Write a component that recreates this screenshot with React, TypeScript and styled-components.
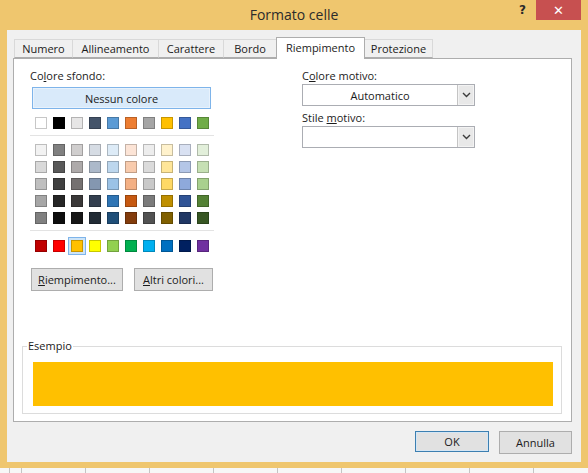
import React from 'react';
import styled, {createGlobalStyle} from 'styled-components';

const THEME = ['#FFFFFF', '#000000', '#E7E6E6', '#44546A', '#5B9BD5', '#ED7D31', '#A5A5A5', '#FFC000', '#4472C4', '#70AD47'];
const TINTS = [
    ['#F2F2F2', '#808080', '#D0CECE', '#D6DCE4', '#DDEBF7', '#FCE4D6', '#EDEDED', '#FFF2CC', '#D9E1F2', '#E2EFDA'],
    ['#D9D9D9', '#595959', '#AEAAAA', '#ACB9CA', '#BDD7EE', '#F8CBAD', '#DBDBDB', '#FFE699', '#B4C6E7', '#C6E0B4'],
    ['#BFBFBF', '#404040', '#757171', '#8497B0', '#9BC2E6', '#F4B084', '#C9C9C9', '#FFD966', '#8EA9DB', '#A9D08E'],
    ['#A6A6A6', '#262626', '#3A3838', '#333F4F', '#2F75B5', '#C65911', '#7B7B7B', '#BF8F00', '#305496', '#548235'],
    ['#808080', '#0D0D0D', '#161616', '#222B35', '#1F4E78', '#833C0C', '#525252', '#806000', '#203764', '#375623'],
];
const STANDARD = ['#C00000', '#FF0000', '#FFC000', '#FFFF00', '#92D050', '#00B050', '#00B0F0', '#0070C0', '#002060', '#7030A0'];
const TABS = [
    {label: 'Numero', width: 58},
    {label: 'Allineamento', width: 86},
    {label: 'Carattere', width: 65},
    {label: 'Bordo', width: 53},
    {label: 'Riempimento', width: 88, active: true},
    {label: 'Protezione', width: 68},
];

const Global = createGlobalStyle`
html, body { margin: 0; padding: 0; }
body {
  font-family: "Open Sans", "Noto Sans", sans-serif;
  font-size: 11px;
  color: #1b1b1b;
}
#root { width: 588px; height: 473px; overflow: hidden; }
`;

const Frame = styled.div`
  box-sizing: border-box;
  width: 588px;
  height: 468px;
  padding: 0 7px 6px 7px;
  background: #efc66e;
  display: flex;
  flex-direction: column;
`;

const TitleBar = styled.div`
  height: 30px;
  display: grid;
  grid-template-columns: 1fr auto 1fr;
`;

const Title = styled.div`
  grid-column: 2;
  line-height: 30px;
  font-size: 14px;
  color: #2b2b2b;
`;

const Controls = styled.div`
  grid-column: 3;
  justify-self: end;
  align-self: start;
  display: flex;
`;

const CaptionButton = styled.div<{$close?: boolean}>`
  width: ${p => (p.$close ? 45 : 27)}px;
  height: 20px;
  display: flex;
  align-items: center;
  justify-content: center;
  background: ${p => (p.$close ? '#c75050' : 'transparent')};
  color: ${p => (p.$close ? '#fff' : '#2a2a2a')};
  font-family: "DejaVu Sans", sans-serif;
  font-weight: bold;
  font-size: ${p => (p.$close ? 13 : 12)}px;
`;

const Body = styled.div`
  box-sizing: border-box;
  height: 432px;
  background: #f0f0f0;
  padding: 7px 9px 8px 6px;
  display: flex;
  flex-direction: column;
`;

const TabRow = styled.div`
  height: 21px;
  display: flex;
  align-items: flex-end;
  padding-left: 1px;
`;

const Tab = styled.div<{$active?: boolean; $w: number}>`
  box-sizing: border-box;
  width: ${p => p.$w + 1}px;
  margin-right: -1px;
  height: ${p => (p.$active ? 22 : 19)}px;
  margin-bottom: ${p => (p.$active ? -1 : 0)}px;
  background: ${p => (p.$active ? '#fff' : '#f0f0f0')};
  border: 1px solid ${p => (p.$active ? '#adadad' : '#d9d9d9')};
  border-bottom: ${p => (p.$active ? 'none' : '1px solid #adadad')};
  display: flex;
  justify-content: center;
  align-items: ${p => (p.$active ? 'flex-start' : 'center')};
  padding-top: ${p => (p.$active ? 2 : 0)}px;
  position: relative;
  z-index: ${p => (p.$active ? 2 : 1)};
  font-size: 11px;
  line-height: 15px;
`;

const Panel = styled.div`
  box-sizing: border-box;
  height: 366px;
  background: #fff;
  border: 1px solid #adadad;
  padding: 9px 9px 7px 8px;
  display: flex;
  flex-direction: column;
`;

const Columns = styled.div`
  display: flex;
  padding-left: 8px;
`;

const LeftColumn = styled.div`
  width: 272px;
  display: flex;
  flex-direction: column;
`;

const RightColumn = styled.div`
  width: 173px;
  display: flex;
  flex-direction: column;
`;

const Label = styled.div<{$gap?: number}>`
  line-height: 15px;
  margin-top: ${p => p.$gap ?? 0}px;
`;

const NoColorButton = styled.div`
  box-sizing: border-box;
  width: 179px;
  height: 22px;
  margin: 4px 0 0 2px;
  border: 1px solid #7eb4ea;
  box-shadow: inset 0 0 0 1px #e8f2fc;
  background: #d9eafa;
  display: flex;
  align-items: center;
  justify-content: center;
`;

const SwatchRow = styled.div<{$top: number}>`
  display: flex;
  gap: 6px;
  margin: ${p => p.$top}px 0 0 5px;
`;

const SwatchGrid = styled.div`
  display: grid;
  grid-template-columns: repeat(10, 12px);
  column-gap: 6px;
  row-gap: 5px;
  margin-left: 5px;
`;

const Swatch = styled.div<{$selected?: boolean}>`
  box-sizing: border-box;
  width: 12px;
  height: 12px;
  border: 1px solid rgba(0, 0, 0, 0.22);
  box-shadow: ${p => (p.$selected ? '0 0 0 2px #cde4f7, 0 0 0 3px #7eb4ea' : 'none')};
`;

const Separator = styled.div<{$after: number}>`
  width: 184px;
  height: 1px;
  background: #e3e3e3;
  margin: 6px 0 ${p => p.$after}px 0;
`;

const ButtonRow = styled.div`
  display: flex;
  gap: 11px;
  margin: 16px 0 0 1px;
`;

const Button = styled.div<{$w: number; $default?: boolean}>`
  box-sizing: border-box;
  width: ${p => p.$w}px;
  height: ${p => (p.$default ? 21 : 23)}px;
  background: #e1e1e1;
  border: 1px solid ${p => (p.$default ? '#3c7fb1' : '#adadad')};
  box-shadow: ${p => (p.$default ? 'inset 0 0 0 1px #d5e6f4' : 'none')};
  display: flex;
  align-items: center;
  justify-content: center;
  line-height: 15px;
`;

const Combo = styled.div`
  box-sizing: border-box;
  height: 22px;
  margin-top: 1px;
  border: 1px solid #abadb3;
  background: #fff;
  display: flex;
`;

const ComboText = styled.div`
  flex: 1;
  display: flex;
  align-items: center;
  justify-content: center;
`;

const ComboArrow = styled.div`
  box-sizing: border-box;
  width: 17px;
  margin: 0;
  background: #e8e8e8;
  border-left: 1px solid #c4c4c4;
  box-shadow: inset 0 0 0 1px #f3f3f3;
  display: flex;
  align-items: center;
  justify-content: center;
`;

const Sample = styled.fieldset`
  margin: auto 0 0 0;
  padding: 0 8px 7px 5px;
  border: 1px solid #dcdcdc;
  min-width: 0;
`;

const SampleLegend = styled.legend`
  padding: 0 1px;
  margin-left: -1px;
  line-height: 14px;
  font-size: 11px;
`;

const SampleFill = styled.div`
  height: 44px;
  margin: 9px 0 0 5px;
  background: #ffc000;
`;

const Footer = styled.div`
  display: flex;
  justify-content: flex-end;
  gap: 10px;
  margin-top: 9px;
`;

const Strip = styled.div`
  height: 5px;
  background-color: #f7f7f7;
  background-image: repeating-linear-gradient(90deg, #c4c4c4 0 1px, transparent 1px 64px);
  background-position: 21px 0;
`;

const Chevron = () => (
    <svg width="9" height="6" viewBox="0 0 9 6">
        <polyline points="1,1 4.5,4.5 8,1" fill="none" stroke="#3c3c3c" strokeWidth="1.4"/>
    </svg>
);

export default function App() {
    return (
        <>
            <Global/>
            <Frame>
                <TitleBar>
                    <Title>Formato celle</Title>
                    <Controls>
                        <CaptionButton>?</CaptionButton>
                        <CaptionButton $close>✕</CaptionButton>
                    </Controls>
                </TitleBar>
                <Body>
                    <TabRow>
                        {TABS.map(t => (
                            <Tab key={t.label} $w={t.width} $active={t.active}>{t.label}</Tab>
                        ))}
                    </TabRow>
                    <Panel>
                        <Columns>
                            <LeftColumn>
                                <Label>Co<u>l</u>ore sfondo:</Label>
                                <NoColorButton>Nessun colore</NoColorButton>
                                <SwatchRow $top={8}>
                                    {THEME.map(c => <Swatch key={c} style={{background: c}}/>)}
                                </SwatchRow>
                                <Separator $after={8}/>
                                <SwatchGrid>
                                    {TINTS.flat().map((c, i) => <Swatch key={i} style={{background: c}}/>)}
                                </SwatchGrid>
                                <Separator $after={9}/>
                                <SwatchRow $top={0}>
                                    {STANDARD.map((c, i) => <Swatch key={c + i} $selected={i === 2} style={{background: c}}/>)}
                                </SwatchRow>
                                <ButtonRow>
                                    <Button $w={92}><span><u>R</u>iempimento...</span></Button>
                                    <Button $w={79}><span><u>A</u>ltri colori...</span></Button>
                                </ButtonRow>
                            </LeftColumn>
                            <RightColumn>
                                <Label>C<u>o</u>lore motivo:</Label>
                                <Combo>
                                    <ComboText>Automatico</ComboText>
                                    <ComboArrow><Chevron/></ComboArrow>
                                </Combo>
                                <Label $gap={4}>Stile <u>m</u>otivo:</Label>
                                <Combo>
                                    <ComboText/>
                                    <ComboArrow><Chevron/></ComboArrow>
                                </Combo>
                            </RightColumn>
                        </Columns>
                        <Sample>
                            <SampleLegend>Esempio</SampleLegend>
                            <SampleFill/>
                        </Sample>
                    </Panel>
                    <Footer>
                        <Button $w={74} $default>OK</Button>
                        <Button $w={73}>Annulla</Button>
                    </Footer>
                </Body>
            </Frame>
            <Strip/>
        </>
    );
}
